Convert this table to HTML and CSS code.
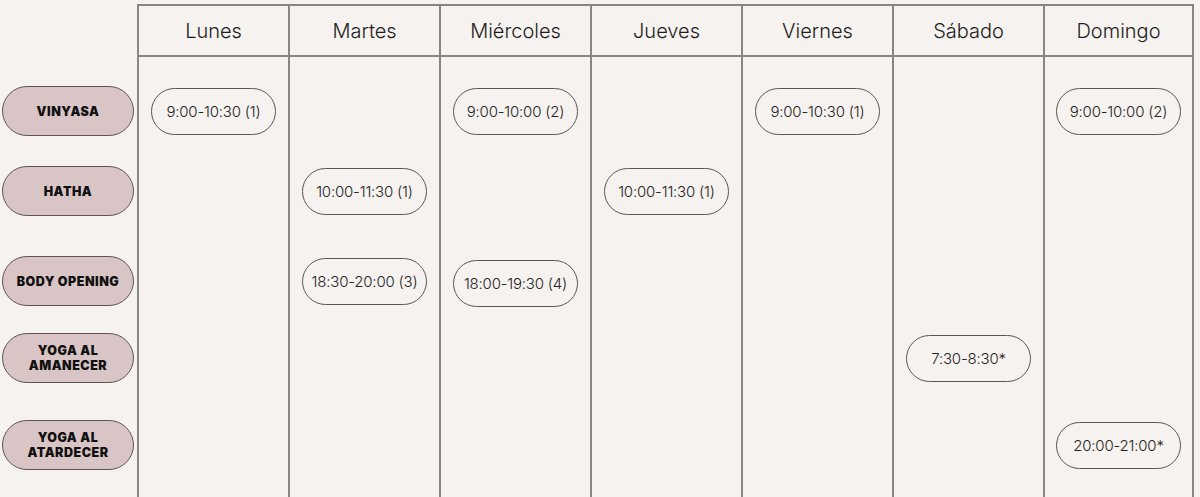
FILE: index.html
```html
<!DOCTYPE html>
<html lang="es">
<head>
    <meta charset="UTF-8">
    <meta name="viewport" content="width=device-width, initial-scale=1.0">
    <title>Horario de Clases</title>

    <link rel="stylesheet" href="styles.css">
</head>
<body>
    <div class="horario">
        <!-- Columna de clases -->
        <div class="clases">
            <div class="cabecera-vacia"></div>
            <div class="cuerpo">
                <div class="fila f1"><div class="clase">Vinyasa</div></div>
                <div class="fila f2"><div class="clase">Hatha</div></div>
                <div class="fila f3"><div class="clase">Body Opening</div></div>
                <div class="fila f4"><div class="clase">Yoga al<br>amanecer</div></div>
                <div class="fila f5"><div class="clase">Yoga al<br>atardecer</div></div>
            </div>
        </div>

        <div class="dia">
            <div class="cabecera">Lunes</div>
            <div class="cuerpo">
                <div class="fila f1"><div class="hora">9:00-10:30 (1)</div></div>
                <div class="fila f2"></div>
                <div class="fila f3"></div>
                <div class="fila f4"></div>
                <div class="fila f5"></div>
            </div>
        </div>

        <div class="dia">
            <div class="cabecera">Martes</div>
            <div class="cuerpo">
                <div class="fila f1"></div>
                <div class="fila f2"><div class="hora">10:00-11:30 (1)</div></div>
                <div class="fila f3"><div class="hora">18:30-20:00 (3)</div></div>
                <div class="fila f4"></div>
                <div class="fila f5"></div>
            </div>
        </div>

        <div class="dia">
            <div class="cabecera">Miércoles</div>
            <div class="cuerpo">
                <div class="fila f1"><div class="hora">9:00-10:00 (2)</div></div>
                <div class="fila f2"></div>
                <div class="fila f3"><div class="hora bajo">18:00-19:30 (4)</div></div>
                <div class="fila f4"></div>
                <div class="fila f5"></div>
            </div>
        </div>

        <div class="dia">
            <div class="cabecera">Jueves</div>
            <div class="cuerpo">
                <div class="fila f1"></div>
                <div class="fila f2"><div class="hora">10:00-11:30 (1)</div></div>
                <div class="fila f3"></div>
                <div class="fila f4"></div>
                <div class="fila f5"></div>
            </div>
        </div>

        <div class="dia">
            <div class="cabecera">Viernes</div>
            <div class="cuerpo">
                <div class="fila f1"><div class="hora">9:00-10:30 (1)</div></div>
                <div class="fila f2"></div>
                <div class="fila f3"></div>
                <div class="fila f4"></div>
                <div class="fila f5"></div>
            </div>
        </div>

        <div class="dia">
            <div class="cabecera">Sábado</div>
            <div class="cuerpo">
                <div class="fila f1"></div>
                <div class="fila f2"></div>
                <div class="fila f3"></div>
                <div class="fila f4"><div class="hora">7:30-8:30*</div></div>
                <div class="fila f5"></div>
            </div>
        </div>

        <div class="dia ultimo">
            <div class="cabecera">Domingo</div>
            <div class="cuerpo">
                <div class="fila f1"><div class="hora">9:00-10:00 (2)</div></div>
                <div class="fila f2"></div>
                <div class="fila f3"></div>
                <div class="fila f4"></div>
                <div class="fila f5"><div class="hora">20:00-21:00*</div></div>
            </div>
        </div>
    </div>
</body>
</html>
```

FILE: styles.css
```css
* {
    box-sizing: border-box;
}

html, body {
    height: 100%;
}

body {
    margin: 0;
    background-color: #f5f2ef;
    font-family: Inter, "Liberation Sans", Arial, sans-serif;
    color: #2a2727;
    overflow: hidden;
}

.horario {
    display: flex;
    height: 100%;
    padding-top: 4px;
}

/* Columna de clases */
.clases {
    width: 137px;
    padding-left: 2px;
}

.cabecera-vacia {
    height: 53px;
}

.cuerpo {
    padding-top: 29px;
}

.fila {
    display: flex;
    justify-content: center;
    align-items: flex-start;
}

.clases .fila {
    justify-content: flex-start;
}

.f1 { height: 80px; }
.f2 { height: 90px; }
.f3 { height: 77px; }
.f4 { height: 87px; }
.f5 { height: 60px; }

.clase {
    width: 132px;
    height: 50px;
    display: flex;
    align-items: center;
    justify-content: center;
    text-align: center;
    background-color: #d9c4c6;
    border: 1px solid #5e5455;
    border-radius: 25px;
    font-size: 12.5px;
    font-weight: 900;
    line-height: 15px;
    letter-spacing: 0.5px;
    text-transform: uppercase;
    color: #111;
}

/* Columnas de los días */
.dia {
    width: 151px;
    height: 100%;
    border-left: 2px solid #8a8583;
}

.dia.ultimo {
    border-right: 2px solid #8a8583;
}

.cabecera {
    height: 53px;
    border-top: 2px solid #8a8583;
    border-bottom: 2px solid #8a8583;
    display: flex;
    align-items: center;
    justify-content: center;
    font-size: 20px;
    font-weight: 300;
    color: #1e1c1c;
}

.hora {
    width: 125px;
    height: 47px;
    margin-top: 2px;
    display: flex;
    align-items: center;
    justify-content: center;
    border: 1px solid #5a5656;
    border-radius: 24px;
    font-size: 15px;
    font-weight: 300;
    letter-spacing: -0.2px;
    color: #262323;
}

.hora.bajo {
    margin-top: 4px;
}
```
